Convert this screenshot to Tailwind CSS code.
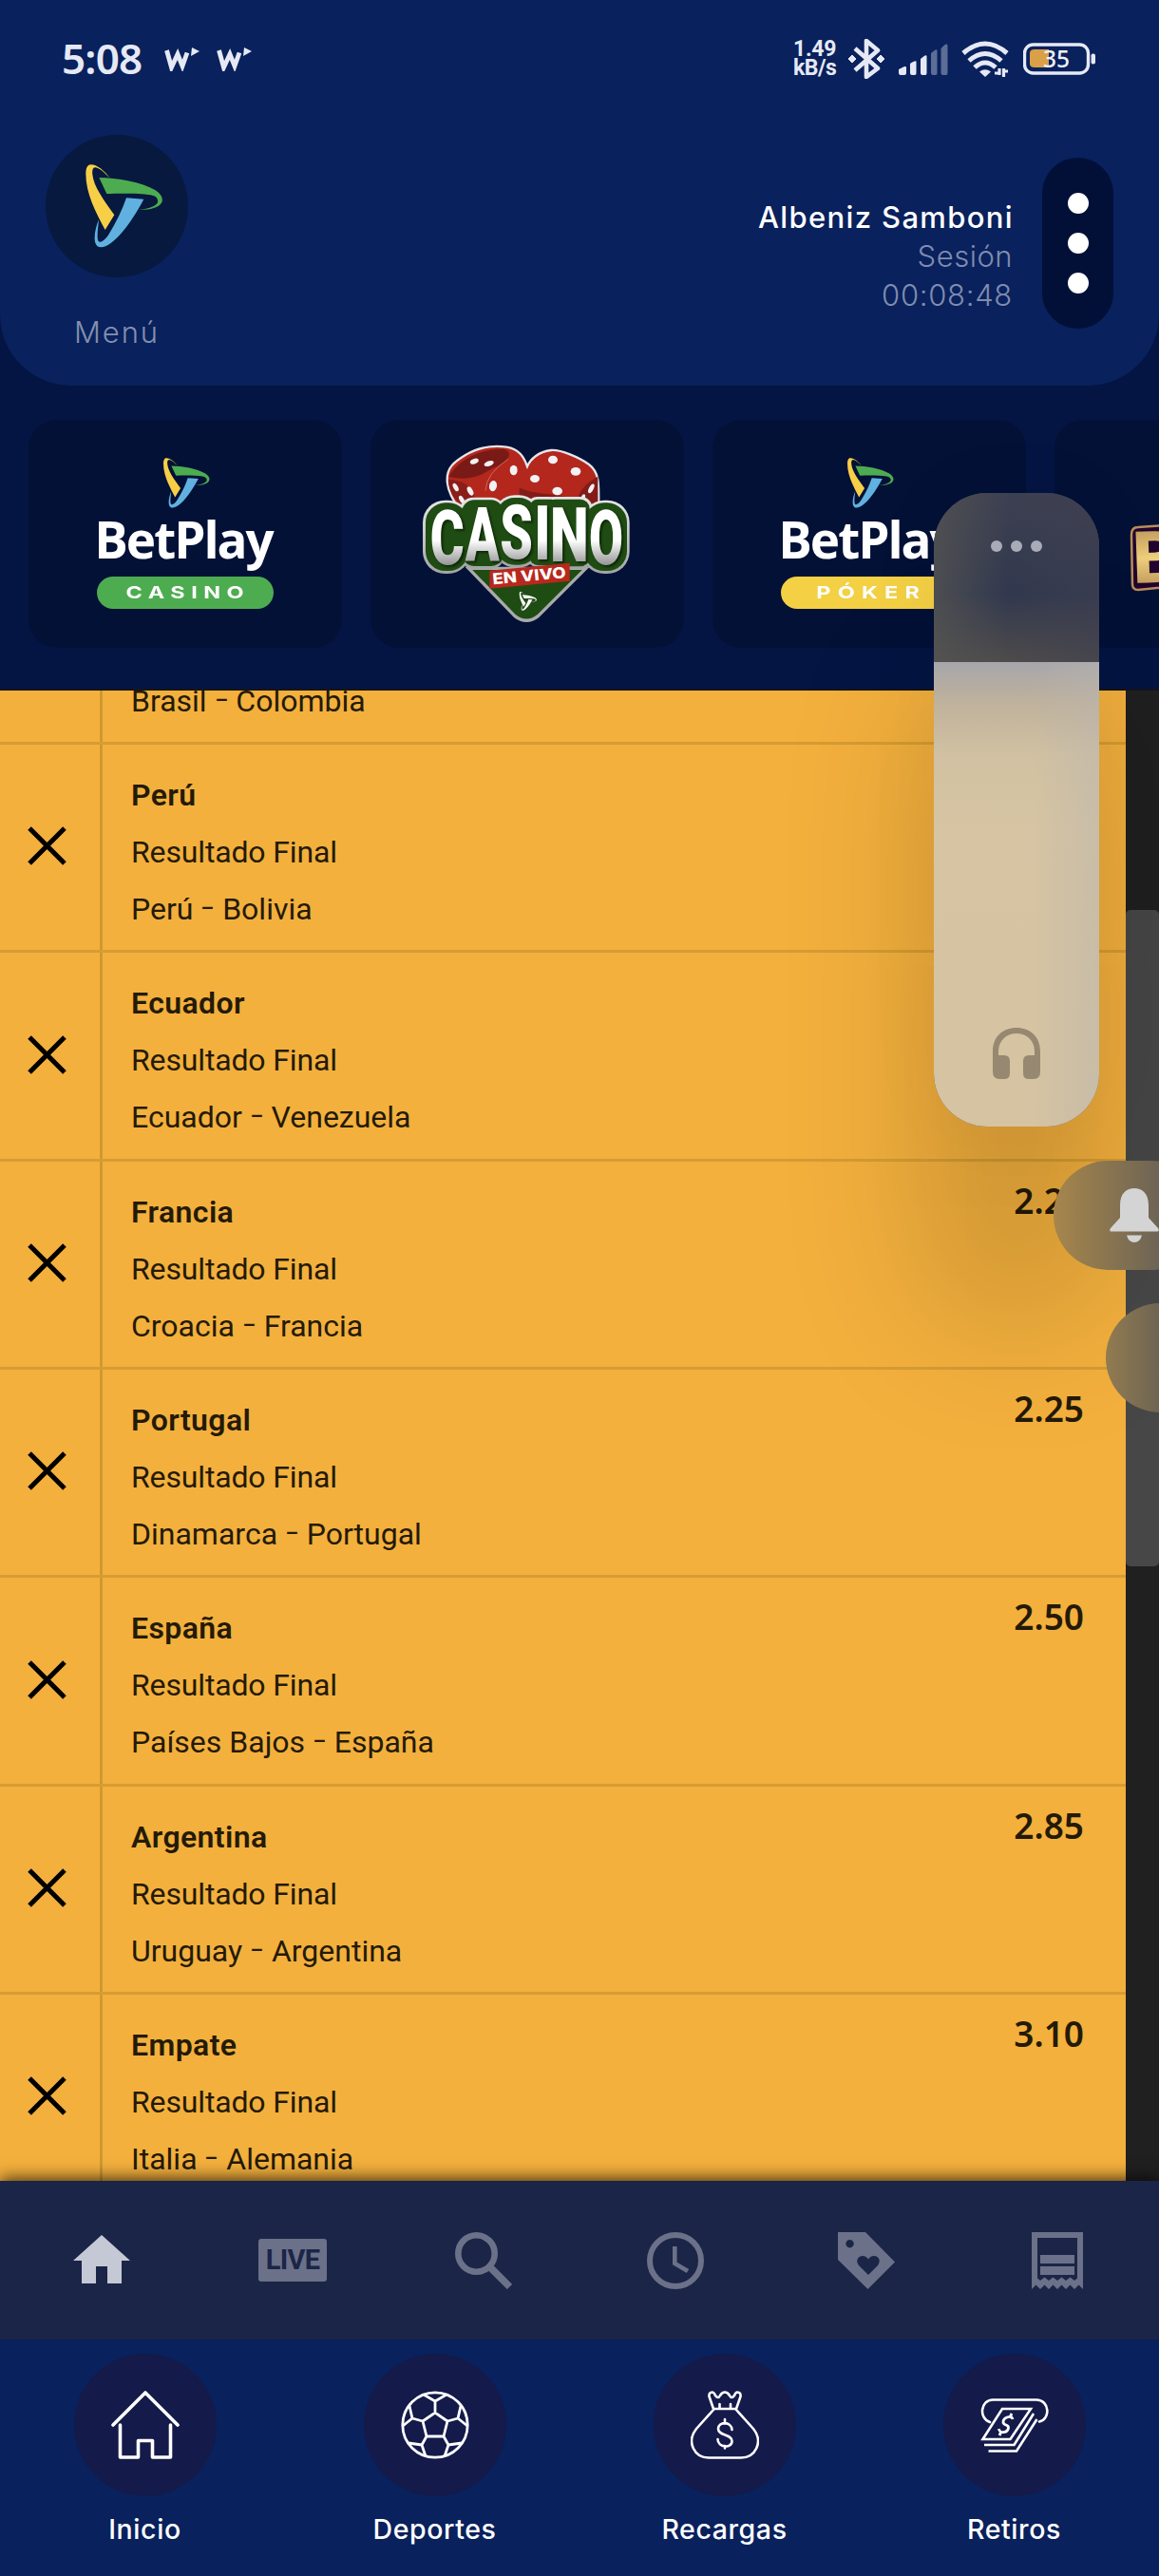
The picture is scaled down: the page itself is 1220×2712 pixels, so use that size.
<!DOCTYPE html>
<html lang="es">
<head>
<meta charset="utf-8">
<title>BetPlay</title>
<script src="https://cdn.jsdelivr.net/npm/@tailwindcss/browser@4"></script>
</head>
<body class="bg-[#041543]">
<svg class="hidden">
  <symbol id="logo" viewBox="0 0 244 264">
    <path fill="#f7cf47" d="M90 160L61 207C30 150 0 90 0 30C0 8 8 0 17 1C35 1 58 20 76 43C58 26 42 10 29 10C21 12 20 20 21 32C25 70 55 110 90 160Z"/>
    <path fill="#4eac50" d="M42 42C100 43 175 55 220 82C243 97 247 115 235 127C222 140 195 145 167 144C200 140 222 132 227 120C229 108 222 100 205 97C170 91 110 92 66 93Z"/>
    <path fill="#60b1e0" d="M128 106L183 110C165 145 120 220 80 248C55 266 35 268 29 245C25 225 32 195 41 175C38 205 34 235 40 243C45 250 60 240 72 222C95 185 115 145 128 106Z"/>
  </symbol>
  <symbol id="logo-white" viewBox="0 0 244 264">
    <path fill="#fff" d="M90 160L61 207C30 150 0 90 0 30C0 8 8 0 17 1C35 1 58 20 76 43C58 26 42 10 29 10C21 12 20 20 21 32C25 70 55 110 90 160ZM42 42C100 43 175 55 220 82C243 97 247 115 235 127C222 140 195 145 167 144C200 140 222 132 227 120C229 108 222 100 205 97C170 91 110 92 66 93ZM128 106L183 110C165 145 120 220 80 248C55 266 35 268 29 245C25 225 32 195 41 175C38 205 34 235 40 243C45 250 60 240 72 222C95 185 115 145 128 106Z"/>
  </symbol>
  <symbol id="cross" viewBox="0 0 40 40"><path d="M2 2L38 38M38 2L2 38" stroke="#000" stroke-width="5" fill="none"/></symbol>
</svg>

<div class="relative flex h-[2712px] w-[1220px] flex-col overflow-hidden font-[Inter,sans-serif]">

  <!-- Header -->
  <header class="flex h-[406px] shrink-0 flex-col rounded-b-[75px] bg-[#09215c]">
    <div class="flex h-[124px] items-center justify-between pl-[65px] pr-[66px] text-[#e6e9f5]">
      <div class="flex items-center">
        <span class="-mt-[2px] font-['Noto_Sans',sans-serif] text-[44px] font-semibold leading-none tracking-[-0.800px]">5:08</span>
        <svg class="ml-[24px] h-[26px] w-[38px]" viewBox="0 0 38 26" fill="none"><path d="M2.500 4L7.500 22L14 8L19 20.500L24 6.500" stroke="currentColor" stroke-width="4.800"/><path d="M29 1L37 5L28 10Z" fill="currentColor"/></svg>
        <svg class="ml-[17px] h-[26px] w-[38px]" viewBox="0 0 38 26" fill="none"><path d="M2.500 4L7.500 22L14 8L19 20.500L24 6.500" stroke="currentColor" stroke-width="4.800"/><path d="M29 1L37 5L28 10Z" fill="currentColor"/></svg>
      </div>
      <div class="flex items-center">
        <div class="flex w-[48px] flex-col font-[Roboto,sans-serif] text-[23px] font-bold leading-[20px]"><span class="tracking-[-0.300px]">1.49</span><span class="tracking-[-0.500px]">kB/s</span></div>
        <svg class="ml-[10px] h-[42px] w-[38px]" viewBox="0 0 38 42" fill="none"><path d="M7 10L31 31L19 40V2L31 12L7 33" stroke="currentColor" stroke-width="4.600" stroke-linejoin="round" stroke-linecap="butt"/><path d="M4 17L8 21L4 25L0 21ZM34 17L38 21L34 25L30 21Z" fill="currentColor" stroke="currentColor" stroke-linejoin="round"/></svg>
        <svg class="ml-[15px] h-[34px] w-[52px]" viewBox="0 0 52 34" fill="currentColor"><path d="M0 28L6 25Q8 24.500 8 26V32Q8 34 6 34H2Q0 34 0 32ZM12 22Q18 18 18.500 20V32Q18.500 34 17 34H14Q12 34 12 32ZM23 17Q29 11.500 29.500 14V32Q29.500 34 28 34H25Q23 34 23 32Z"/><path opacity=".38" d="M34 11Q40 5.500 40.500 8V32Q40.500 34 39 34H36Q34 34 34 32ZM44.500 6Q51 -1 51.500 3V32Q51.500 34 50 34H46.500Q44.500 34 44.500 32Z"/></svg>
        <svg class="ml-[13px] h-[38px] w-[52px]" viewBox="0 0 52 38" fill="none" stroke="currentColor" stroke-width="5"><path d="M3 13Q26 -7 49 13"/><path d="M9 21Q26 6 43 21"/><path d="M15 28Q26 18 37 28"/><path d="M20 32.500Q26 28 32 32.500L26 38Z" fill="currentColor" stroke="none"/><path d="M41 29V36M36 34H40M45.500 29V38M46 32H50" stroke-width="3.200"/></svg>
        <svg class="ml-[14px] h-[34px] w-[77px]" viewBox="0 0 77 34"><rect x="1.500" y="2" width="67" height="30" rx="9" fill="none" stroke="currentColor" stroke-width="3.400"/><path d="M12 7H27V26H12Q7 26 7 22V11Q7 7 12 7Z" fill="#d9a047"/><rect x="71.500" y="11.500" width="4.500" height="11" rx="2" fill="currentColor"/><text x="35" y="25.500" text-anchor="middle" font-family="Noto Sans" font-size="24.500" font-weight="500" fill="#eef0fa">35</text></svg>
      </div>
    </div>
    <div class="flex flex-1 justify-between pl-[48px] pr-[48px]">
      <div class="flex w-[150px] flex-col items-center pt-[18px]">
        <div class="flex size-[150px] items-center justify-center rounded-full bg-[#07193f] pl-[15px]"><svg class="h-[88px] w-[82px]"><use href="#logo"/></svg></div>
        <span class="mt-[36px] text-[31px] font-light leading-[44px] tracking-[1.900px] text-[#8390ae]">Menú</span>
      </div>
      <div class="flex items-start pt-[42px]">
        <div class="mr-[31px] mt-[42px] flex flex-col items-end text-[31px] font-light leading-[41px] text-[#7f8cb0]">
          <span class="-mr-[1px] font-[450] tracking-[1.350px] text-white">Albeniz Samboni</span>
          <span class="tracking-[0.500px]">Sesión</span>
          <span class="tracking-[0.700px]">00:08:48</span>
        </div>
        <div class="flex h-[180px] w-[75px] flex-col items-center justify-center gap-5 rounded-full bg-[#021038]">
          <i class="size-[22px] rounded-full bg-white"></i><i class="size-[22px] rounded-full bg-white"></i><i class="size-[22px] rounded-full bg-white"></i>
        </div>
      </div>
    </div>
  </header>

  <!-- Category cards -->
  <section class="flex h-[321px] shrink-0 gap-[30px] overflow-hidden border-b-2 border-[#14151f] pl-[30px] pt-[36px]">
    <div class="flex h-[240px] w-[330px] shrink-0 flex-col items-center rounded-[30px] bg-[#031137] pt-[40px]">
      <svg class="ml-[2px] h-[53px] w-[49px]"><use href="#logo"/></svg>
      <span class="-mt-[3px] mb-[3px] pr-[4px] font-['Open_Sans',sans-serif] text-[53px] font-bold leading-[72px] tracking-[-2px] text-white">BetPlay</span>
      <div class="flex h-[34px] w-[186px] items-center justify-center rounded-full bg-[#4eac50]"><span class="inline-block scale-x-130 pl-[4px] text-[18px] font-bold leading-none tracking-[5px] text-white">CASINO</span></div>
    </div>
    <div class="flex h-[240px] w-[330px] shrink-0 items-center justify-center rounded-[30px] bg-[#031137]">
      <svg class="-mt-[4px] h-[210px] w-[250px]" viewBox="0 0 750 630">
        <defs>
          <linearGradient id="silver" x1="0" y1="0" x2="0" y2="1"><stop offset="0" stop-color="#e6e6e8"/><stop offset="1" stop-color="#a2a4a4"/></linearGradient>
          <linearGradient id="ltr" gradientUnits="userSpaceOnUse" x1="0" y1="230" x2="0" y2="415"><stop offset="0" stop-color="#fff"/><stop offset=".6" stop-color="#fff"/><stop offset="1" stop-color="#9b9b9b"/></linearGradient>
        </defs>
        <path d="M122 150C122 112 142 95 180 72C220 48 260 40 310 47C350 53 365 80 375 108C385 85 410 62 450 57C480 54 540 80 570 102C600 125 603 150 600 250L170 250C140 220 122 180 122 150Z" fill="#b3271c" stroke="#e6e6ea" stroke-width="7"/>
        <path d="M128 140C150 98 215 52 300 53C335 62 315 95 270 112C225 140 185 155 128 140Z" fill="#7a1a17"/>
        <path d="M126 150C170 150 205 170 215 225H165C140 210 126 180 126 150Z" fill="#8a1e19"/>
        <path d="M350 175C400 200 450 190 520 210V225H350ZM598 140C560 160 535 190 530 225H598Z" fill="#831c18"/>
        <path d="M315 85Q245 130 243 185" fill="none" stroke="#dd8880" stroke-width="2"/>
        <g fill="#f3f1f3"><ellipse cx="208" cy="92" rx="14" ry="8" transform="rotate(-20 208 92)"/><ellipse cx="254" cy="99" rx="16" ry="8" transform="rotate(-20 254 99)"/><ellipse cx="332" cy="120" rx="12" ry="16"/><ellipse cx="267" cy="170" rx="12" ry="17" transform="rotate(10 267 170)"/><ellipse cx="149" cy="174" rx="7" ry="14" transform="rotate(-30 149 174)"/><ellipse cx="195" cy="186" rx="8" ry="15" transform="rotate(-28 195 186)"/><ellipse cx="168" cy="213" rx="7" ry="14" transform="rotate(-28 168 213)"/><ellipse cx="456" cy="87" rx="15" ry="13"/><ellipse cx="528" cy="124" rx="16" ry="13"/><ellipse cx="399" cy="147" rx="15" ry="12"/><ellipse cx="470" cy="186" rx="16" ry="13"/><ellipse cx="577" cy="178" rx="7" ry="16" transform="rotate(28 577 178)"/><ellipse cx="550" cy="208" rx="6" ry="13" transform="rotate(28 550 208)"/></g>
        <path d="M190 430L335 580Q373 610 410 580L560 430Z" fill="#1f4c12" stroke="#a9abab" stroke-width="10"/>
        <g fill="url(#silver)"><rect x="45" y="215" width="150" height="232" rx="70"/><rect x="160" y="206" width="145" height="225" rx="45"/><rect x="270" y="199" width="145" height="228" rx="65"/><rect x="375" y="204" width="100" height="222" rx="30"/><rect x="425" y="204" width="155" height="228" rx="35"/><rect x="548" y="215" width="150" height="232" rx="70"/></g>
        <g fill="#1f4c12"><rect x="54" y="223" width="135" height="215" rx="62"/><rect x="168" y="214" width="132" height="209" rx="40"/><rect x="277" y="207" width="130" height="212" rx="58"/><rect x="383" y="212" width="92" height="208" rx="25"/><rect x="432" y="212" width="140" height="212" rx="30"/><rect x="555" y="223" width="135" height="215" rx="62"/></g>
        <g font-family="Roboto" font-weight="900" font-size="240" fill="url(#ltr)" class="drop-shadow-[6px_6px_3px_rgba(5,25,3,0.7)]">
          <text x="68" y="416" textLength="108" lengthAdjust="spacingAndGlyphs">C</text><text x="179" y="407" textLength="108" lengthAdjust="spacingAndGlyphs">A</text><text x="289" y="400" textLength="104" lengthAdjust="spacingAndGlyphs">S</text><text x="397" y="402" textLength="52" lengthAdjust="spacingAndGlyphs">I</text><text x="447" y="407" textLength="122" lengthAdjust="spacingAndGlyphs">N</text><text x="570" y="416" textLength="108" lengthAdjust="spacingAndGlyphs">O</text>
        </g>
        <path d="M256 437L509 413V470L256 494Z" fill="#b8281d"/>
        <text x="267" y="481" transform="rotate(-5.400 267 481)" font-family="Inter" font-weight="800" font-size="48" textLength="232" lengthAdjust="spacingAndGlyphs" fill="#fff">EN VIVO</text>
        <use href="#logo-white" x="349" y="504" width="57" height="60"/>
      </svg>
    </div>
    <div class="flex h-[240px] w-[330px] shrink-0 flex-col items-center rounded-[30px] bg-[#031137] pt-[40px]">
      <svg class="ml-[2px] h-[53px] w-[49px]"><use href="#logo"/></svg>
      <span class="-mt-[3px] mb-[3px] pr-[4px] font-['Open_Sans',sans-serif] text-[53px] font-bold leading-[72px] tracking-[-2px] text-white">BetPlay</span>
      <div class="flex h-[34px] w-[186px] items-center justify-center rounded-full bg-[#f3d044]"><span class="inline-block scale-x-130 pl-[4px] text-[18px] font-bold leading-none tracking-[5.600px] text-white">PÓKER</span></div>
    </div>
    <div class="flex h-[240px] w-[330px] shrink-0 rounded-[30px] bg-[#031137] pl-[78px] pt-[105px]">
      <svg class="h-[80px] w-[200px]" viewBox="0 0 200 80">
        <defs><linearGradient id="gold" x1="0" y1="0" x2="0" y2="1"><stop offset="0" stop-color="#a98550"/><stop offset=".5" stop-color="#efcf7c"/><stop offset="1" stop-color="#a8804b"/></linearGradient></defs>
        <path d="M3 16Q3 8 10 8L70 4V68L10 74Q4 74 4 68Z" fill="#22032f" stroke="#b98e58" stroke-width="2.500"/>
        <text x="5" y="67" font-family="Roboto" font-weight="900" font-size="76" fill="url(#gold)" transform="rotate(-2 8 60)">B</text>
      </svg>
    </div>
  </section>

  <!-- Bet slip -->
  <main class="flex h-[1569px] shrink-0 overflow-hidden">
    <div id="slip" class="-mt-[162.300px] flex w-[1185px] shrink-0 flex-col self-start bg-[#f3b03d] font-[Roboto,sans-serif] text-[#241a08]"></div>
    <div class="flex-1 bg-[#202020] pt-[231px]"><div class="h-[691px] rounded-[5px] bg-[#474747]"></div></div>
  </main>

  <!-- Sportsbook tabs -->
  <nav class="z-10 grid h-[167px] shrink-0 grid-cols-6 items-center bg-[#1b2547] px-[6px] text-[#6b7188] shadow-[0_-3px_16px_rgba(0,0,0,0.7)]">
    <svg class="mt-[1px] h-[60px] w-[60px] justify-self-center text-[#c5c9d6]" viewBox="0 0 60 60" fill="currentColor"><path d="M30 3L60 30H51V54H36V36H24V54H9V30H0Z"/></svg>
    <div class="flex h-[45px] w-[72px] items-center justify-center justify-self-center rounded-[3px] bg-[#6b7188] font-[Roboto,sans-serif] text-[29px] font-bold leading-none tracking-[-0.700px] text-[#1b2547]">LIVE</div>
    <svg class="h-[60px] w-[60px] justify-self-center" viewBox="0 0 60 60" fill="none" stroke="currentColor"><circle cx="22.500" cy="22.500" r="19.200" stroke-width="6.600"/><path d="M36 36L57.500 57.500" stroke-width="7.500"/><path d="M36 36L41 41" stroke-width="6"/></svg>
    <svg class="h-[60px] w-[60px] justify-self-center" viewBox="0 0 60 60" fill="none" stroke="currentColor"><circle cx="30" cy="30" r="27" stroke-width="6"/><path d="M29.300 15V33L43 41" stroke-width="4.600"/></svg>
    <svg class="h-[60px] w-[60px] justify-self-center" viewBox="0 0 60 60" fill="currentColor" fill-rule="evenodd"><path d="M0 0H29L60 31.500L31.500 60L0 29ZM12.500 8A4.200 4.200 0 1 0 12.600 8ZM32 45L22 35C16 27 27 21 32 28.500C37 21 48 27 42 35Z"/></svg>
    <svg class="h-[60px] w-[54px] justify-self-center" viewBox="0 0 54 60" fill="currentColor" fill-rule="evenodd"><path d="M0 0H54V60L49.500 55.500L45 60L40.500 55.500L36 60L31.500 55.500L27 60L22.500 55.500L18 60L13.500 55.500L9 60L4.500 55.500L0 60ZM6 6V48.500L9 51L13.500 47.500L18 51L22.500 47.500L27 51L31.500 47.500L36 51L40.500 47.500L45 51L48 48.500V6Z"/><path d="M9 24H45V33H9ZM9 36H45V45H9Z"/></svg>
  </nav>

  <!-- Bottom navigation -->
  <nav class="z-10 grid h-[249px] shrink-0 grid-cols-4 bg-[#09215c] pt-[15px] text-[28.500px] font-[450] leading-[34px] tracking-[0.600px] text-white">
    <div class="flex flex-col items-center">
      <div class="flex size-[150px] items-center justify-center rounded-full bg-[#141a4a]"><svg class="size-[72px]" viewBox="0 0 72 72" fill="none" stroke="#fff" stroke-width="3.600" stroke-linecap="round" stroke-linejoin="round"><path d="M2 36L36 2L70 36M9.500 36V70H28.500V52.500H43.500V70H62.500V36"/></svg></div>
      <span class="mt-[18px]">Inicio</span>
    </div>
    <div class="flex flex-col items-center">
      <div class="flex size-[150px] items-center justify-center rounded-full bg-[#141a4a]"><svg class="size-[72px]" viewBox="0 0 72 72" fill="none" stroke="#fff" stroke-width="2.800" stroke-linejoin="round"><circle cx="36" cy="36" r="34.200"/><path d="M36 23L49 32L45 48H27L23 32ZM36 23V11L24 4M36 11L48 4M49 32L60 29L63 16M60 29L70 37M45 48L50 57L64 55M50 57L46 69M27 48L22 57L8 55M22 57L26 69M23 32L12 29L9 16M12 29L2 37"/></svg></div>
      <span class="mt-[18px]">Deportes</span>
    </div>
    <div class="flex flex-col items-center">
      <div class="flex size-[150px] items-center justify-center rounded-full bg-[#141a4a]"><svg class="size-[72px]" viewBox="0 0 72 72" fill="none" stroke="#fff" stroke-width="2.600" stroke-linejoin="round" stroke-linecap="round"><path d="M24 19L19.500 6Q19 1.500 23 1.500Q25 2 26 5Q29 9 31 5Q33 1.500 36 1.500Q39 1.500 41 5Q43 9 46 5Q47 2 49 1.500Q53 1.500 52.500 6L48 19ZM30.500 14V18M42 14V18"/><path d="M24 20L6 40C-5 54 4 70.500 19 70.500H53C68 70.500 77 54 66 40L48 20"/><path d="M43.500 41C43 32 29 32 29 40C29 48 43.500 45 43.500 53C43.500 61 28.500 60 28.500 51M36 30V34.500M36 58V60.500"/></svg></div>
      <span class="mt-[18px]">Recargas</span>
    </div>
    <div class="flex flex-col items-center">
      <div class="flex size-[150px] items-center justify-center rounded-full bg-[#141a4a]"><svg class="size-[72px]" viewBox="0 0 72 72" fill="none" stroke="#fff" stroke-width="2.600" stroke-linejoin="miter"><path d="M10 33C-2 29 0 9.500 13 9.500H59C73 9.500 74 30 62 32.500" stroke-linecap="round"/><path d="M23 19H53L31.500 51H2.500ZM56 24L35.500 57H4M59.500 30L38 63.500H8.500"/><path d="M34 30C33 25 24 28 24 33C24 37 30 35 29.500 39C29 44 20 46 19.500 40M31 28L33 24M22 43L20 47" stroke-width="2.800"/></svg></div>
      <span class="mt-[18px]">Retiros</span>
    </div>
  </nav>

  <!-- System volume overlay -->
  <div class="absolute left-[983px] top-[519px] h-[667px] w-[174px] rounded-[56px] shadow-[0_200px_160px_rgba(0,0,0,0.18),0_0_90px_rgba(0,0,0,0.04)]">
    <div class="flex h-full flex-col overflow-hidden rounded-[56px] bg-[#3a3d4e]">
      <div class="flex h-[178px] shrink-0 justify-center gap-[9px] bg-[linear-gradient(90deg,rgba(85,85,82,.75),transparent_45%,rgba(64,64,80,.5)),linear-gradient(180deg,#3d4051,#31384e_60%,#4e4b4b)] pt-[50px]">
        <i class="size-[12px] rounded-full bg-[#a9acb8]"></i><i class="size-[12px] rounded-full bg-[#a9acb8]"></i><i class="size-[12px] rounded-full bg-[#a9acb8]"></i>
      </div>
      <div class="flex flex-1 items-end justify-center bg-[linear-gradient(90deg,transparent_60%,rgba(185,180,175,.45)),linear-gradient(180deg,#a6a6ab,#c0b29c_9%,#d1c1a2_20%,#d6c4a2_35%,#d5c3a1)] pb-[50px]">
        <svg class="h-[54px] w-[50px]" viewBox="0 0 50 54" fill="#978871"><path d="M0 25C0 9 11 0 25 0C39 0 50 9 50 25V46Q50 54 43 54H38Q32 54 32 48V35Q32 29 38 29H44V25C44 13 35 6 25 6C15 6 6 13 6 25V29H12Q18 29 18 35V48Q18 54 12 54H7Q0 54 0 46Z"/></svg>
      </div>
    </div>
  </div>
  <div class="absolute left-[1109px] top-[1222px] flex h-[115px] w-[160px] items-center rounded-full bg-[linear-gradient(90deg,#a6864b,#6d6455_70%)] pl-[59px]">
    <svg class="h-[57px] w-[52px]" viewBox="0 0 52 57" fill="#d4d4d4"><path d="M11 31V18C11 5 18 0 26 0C34 0 41 5 41 18V31L51 42Q53 45.500 50 45.500H2Q-1 45.500 1 42ZM18 49.500H34Q32 57 26 57Q20 57 18 49.500Z"/></svg>
  </div>
  <div class="absolute left-[1164px] top-[1372px] h-[115px] w-[115px] rounded-full bg-[linear-gradient(90deg,#927b50,#6d6453_50%)]"></div>
</div>

<script>
const bets = [
  ['Brasil', 'Brasil', 'Colombia', ''],
  ['Perú', 'Perú', 'Bolivia', ''],
  ['Ecuador', 'Ecuador', 'Venezuela', ''],
  ['Francia', 'Croacia', 'Francia', '2.20'],
  ['Portugal', 'Dinamarca', 'Portugal', '2.25'],
  ['España', 'Países Bajos', 'España', '2.50'],
  ['Argentina', 'Uruguay', 'Argentina', '2.85'],
  ['Empate', 'Italia', 'Alemania', '3.10'],
];
document.getElementById('slip').innerHTML = bets.map(([pick, home, away, odds]) => `
  <div class="flex h-[219.330px] shrink-0 border-b-[3px] border-[#d69d33]">
    <div class="flex w-[108px] items-center border-r-[3px] border-[#d09830] pb-[3px] pl-[29px]"><svg class="size-[41px]"><use href="#cross"/></svg></div>
    <div class="flex flex-1 justify-between pl-[30px] pr-[44px]">
      <div class="flex flex-col pt-[23px] text-[32px] leading-[60px]"><b class="font-semibold tracking-[0.400px]">${pick}</b><span class="tracking-[-0.150px]">Resultado Final</span><span>${home} <span class="mx-[3px] inline-block -translate-y-[3px] scale-x-140">-</span> ${away}</span></div>
      <div class="pt-[15px] font-['Noto_Sans',sans-serif] text-[37px] font-semibold leading-[52px]">${odds}</div>
    </div>
  </div>`).join('');
</script>
</body>
</html>
